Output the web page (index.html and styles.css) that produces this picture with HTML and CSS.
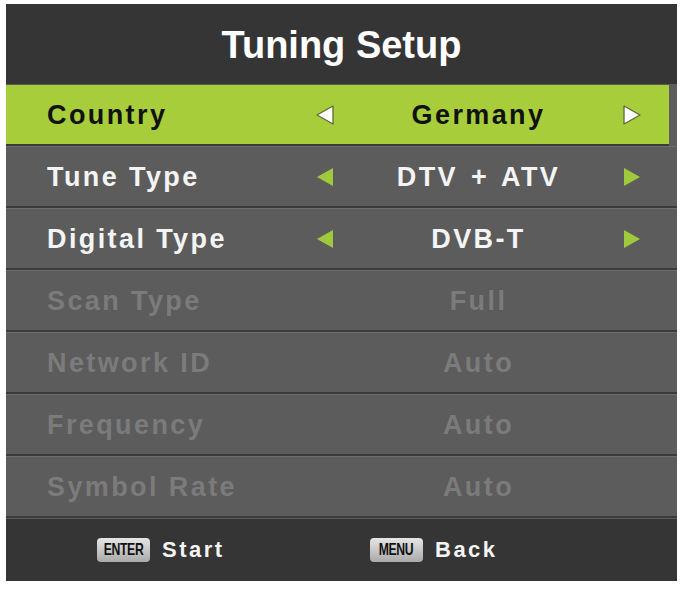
FILE: index.html
```html
<!DOCTYPE html>
<html>
<head>
<meta charset="utf-8">
<link rel="stylesheet" href="styles.css">
</head>
<body>
<div class="panel">
  <div class="header"><span class="title">Tuning Setup</span></div>
  <div class="list">
    <div class="row selected">
      <span class="label">Country</span>
      <span class="arrow"><svg viewBox="0 0 20 22" class="tri"><path d="M18 2 L2 11 L18 20 Z" fill="#fff" stroke="#5a6a3a" stroke-width="1.3" stroke-linejoin="round"/></svg></span>
      <span class="value">Germany</span>
      <span class="arrow"><svg viewBox="0 0 20 22" class="tri"><path d="M2 2 L18 11 L2 20 Z" fill="#fff" stroke="#5a6a3a" stroke-width="1.3" stroke-linejoin="round"/></svg></span>
    </div>
    <div class="row">
      <span class="label">Tune Type</span>
      <span class="arrow"><svg viewBox="0 0 20 22" class="tri"><path d="M18 2 L2 11 L18 20 Z" fill="#9fca3c"/></svg></span>
      <span class="value">DTV + ATV</span>
      <span class="arrow"><svg viewBox="0 0 20 22" class="tri"><path d="M2 2 L18 11 L2 20 Z" fill="#9fca3c"/></svg></span>
    </div>
    <div class="row">
      <span class="label">Digital Type</span>
      <span class="arrow"><svg viewBox="0 0 20 22" class="tri"><path d="M18 2 L2 11 L18 20 Z" fill="#9fca3c"/></svg></span>
      <span class="value">DVB-T</span>
      <span class="arrow"><svg viewBox="0 0 20 22" class="tri"><path d="M2 2 L18 11 L2 20 Z" fill="#9fca3c"/></svg></span>
    </div>
    <div class="row disabled">
      <span class="label">Scan Type</span>
      <span class="arrow"></span>
      <span class="value">Full</span>
      <span class="arrow"></span>
    </div>
    <div class="row disabled">
      <span class="label">Network ID</span>
      <span class="arrow"></span>
      <span class="value">Auto</span>
      <span class="arrow"></span>
    </div>
    <div class="row disabled">
      <span class="label">Frequency</span>
      <span class="arrow"></span>
      <span class="value">Auto</span>
      <span class="arrow"></span>
    </div>
    <div class="row disabled">
      <span class="label">Symbol Rate</span>
      <span class="arrow"></span>
      <span class="value">Auto</span>
      <span class="arrow"></span>
    </div>
  </div>
  <div class="footer">
    <div class="hint"><span class="key"><span class="key-text">ENTER</span></span><span class="hint-text">Start</span></div>
    <div class="hint"><span class="key"><span class="key-text">MENU</span></span><span class="hint-text">Back</span></div>
  </div>
</div>
</body>
</html>
```

FILE: styles.css
```css
html, body {
  margin: 0;
  padding: 0;
  background: #ffffff;
}

body {
  font-family: "Liberation Sans", Arial, sans-serif;
}

.panel {
  margin: 4px 0 0 6px;
  width: 671px;
  background: #353535;
}

.header {
  height: 80px;
  display: flex;
  align-items: center;
  justify-content: center;
  background: #353535;
}

.title {
  display: inline-block;
  color: #ffffff;
  font-size: 38px;
  font-weight: bold;
  padding-top: 2px;
}

.list {
  background: #5c5c5c;
}

.row {
  display: grid;
  grid-template-columns: 306px 26px 281px 26px 1fr;
  align-items: center;
  height: 59px;
  border-top: 1px solid #6e6e6e;
  border-bottom: 2px solid #3b3b3b;
  background: #5c5c5c;
  color: #f4f4f4;
}

.row.selected {
  background: #a7cd3b;
  color: #111111;
  margin-right: 8px;
  border-top-color: #5a5a5a;
}

.row.disabled {
  color: #7b7b7b;
}

.label {
  padding-left: 41px;
  padding-top: 2px;
  font-size: 27px;
  font-weight: bold;
  letter-spacing: 2.4px;
  white-space: nowrap;
}

.value {
  text-align: center;
  padding-top: 2px;
  font-size: 27px;
  font-weight: bold;
  letter-spacing: 2.4px;
  word-spacing: 3px;
  white-space: nowrap;
}

.arrow {
  display: flex;
  justify-content: center;
  align-items: center;
}

.tri {
  display: block;
  flex: none;
  width: 20px;
  height: 22px;
}

.footer {
  height: 62px;
  border-top: 1px solid #5a5a5a;
  display: grid;
  grid-template-columns: 273px 1fr;
  align-items: center;
  padding-left: 91px;
  background: #353535;
}

.hint {
  display: flex;
  align-items: center;
  gap: 12px;
}

.key {
  display: inline-flex;
  align-items: center;
  justify-content: center;
  width: 53px;
  height: 24px;
  border-radius: 4px;
  background: linear-gradient(#e6e6e6, #a9a9a9);
  color: #111111;
  overflow: hidden;
}

.key-text {
  display: inline-block;
  font-size: 17px;
  font-weight: bold;
  letter-spacing: -0.5px;
  transform: scaleX(0.72);
  white-space: nowrap;
}

.hint-text {
  color: #f4f4f4;
  font-size: 22px;
  font-weight: bold;
  letter-spacing: 2.5px;
}
```
